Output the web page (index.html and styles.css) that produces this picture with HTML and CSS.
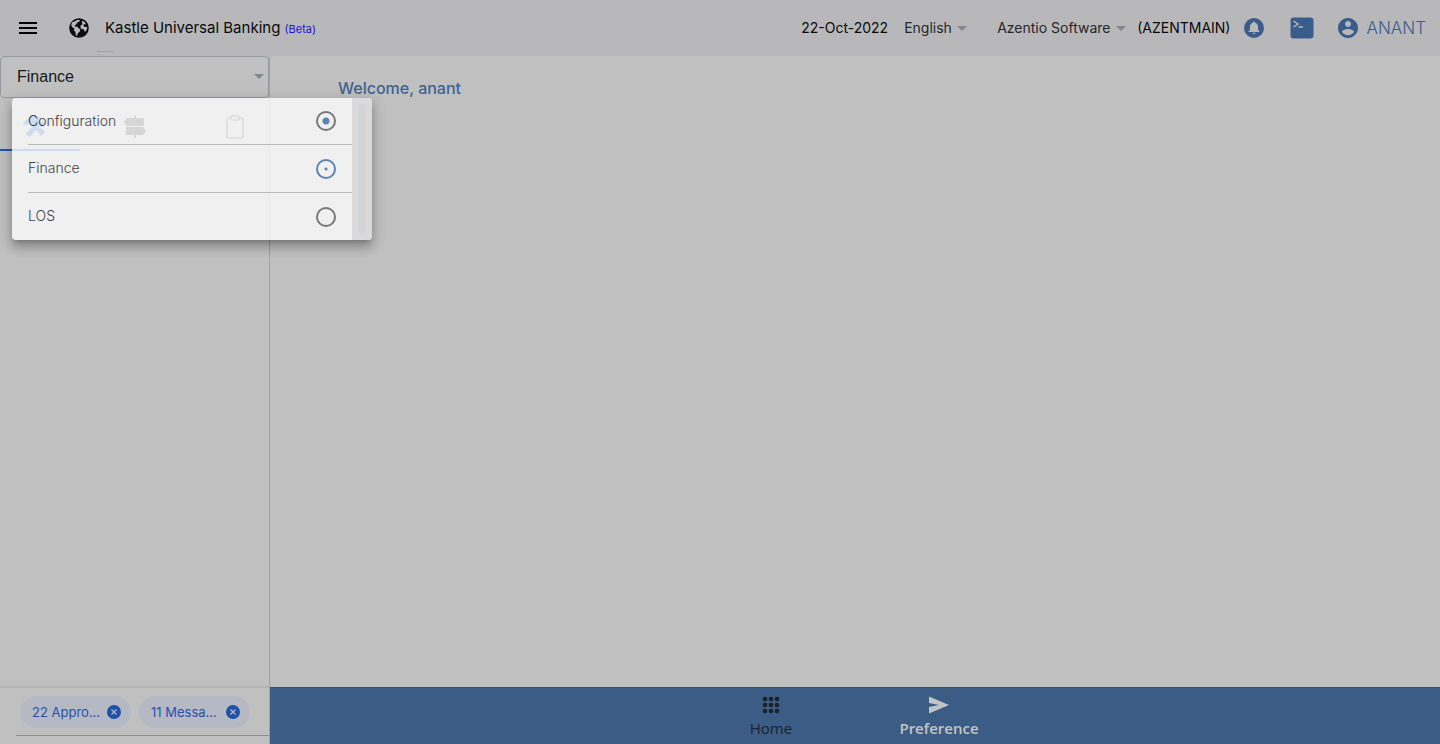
FILE: index.html
```html
<!DOCTYPE html>
<html lang="en">
<head>
<meta charset="utf-8">
<title>Kastle Universal Banking</title>
<link rel="stylesheet" href="styles.css">
</head>
<body>
<div class="app">
  <header class="topbar">
    <button class="icon-btn menu-btn" aria-label="Menu"><svg width="18" height="12" viewBox="0 0 18 12"><path d="M0 0h18v2H0zM0 5h18v2H0zM0 10h18v2H0z"/></svg></button>
    <button class="icon-btn globe-btn" aria-label="Region"><svg width="20" height="20" viewBox="0 0 512 512"><path fill="#0b0c0e" fill-rule="evenodd" d="M256 5a251 251 0 1 0 0 502 251 251 0 0 0 0-502zM152 82l40-24 55-12 35 20-28 34-50 12-10 45-50 28 10 32 62 5 40 50 35 12-14 62-55 48-16 65-33-18-8-80-40-45 12-50-50-30-32-60 22-70zM338 66l60 35 43 64-42-9-30 20 10 40 35 15 48-9v52l-35 73-34-6-15-52-58-7-30-45 12-50 48-30-18-30z"/></svg></button>
    <h1 class="title">Kastle Universal Banking <span class="beta">(Beta)</span></h1>
    <span class="title-rule"></span>
    <time class="date">22-Oct-2022</time>
    <div class="pick language"><select aria-label="Language"><option>English</option></select></div>
    <div class="pick company"><select aria-label="Company"><option>Azentio Software</option></select></div>
    <span class="entity">(AZENTMAIN)</span>
    <button class="icon-btn bell-btn" aria-label="Notifications"><svg width="20" height="20" viewBox="0 0 20 20"><circle cx="10" cy="10" r="10" fill="#3a5c8a"/><path fill="#b8b8ba" d="M10 3.400c-.6 0-1 .4-1 1v.4C7 5.300 5.900 7 5.900 9v3l-1.300 1.300v.7h10.800v-.7L14.100 12V9c0-2-1.100-3.700-3.100-4.200v-.4c0-.6-.4-1-1-1zM8.600 14.800a1.400 1.400 0 0 0 2.800 0z"/></svg></button>
    <button class="icon-btn terminal-btn" aria-label="Console"><svg width="24" height="22" viewBox="0 0 24 22"><rect x=".5" y=".5" width="23" height="21" rx="3" fill="#3a5c8a"/><path fill="none" stroke="#b8b8ba" stroke-width="1.500" d="M3.500 4l4.500 3-4.500 3M8.500 10H13"/></svg></button>
    <button class="icon-btn user"><svg width="20" height="20" viewBox="2 2 20 20"><path fill="#3a5c8a" d="M12 2C6.480 2 2 6.480 2 12s4.480 10 10 10 10-4.480 10-10S17.520 2 12 2zm0 3c1.660 0 3 1.340 3 3s-1.340 3-3 3-3-1.340-3-3 1.340-3 3-3zm0 14.200c-2.500 0-4.710-1.280-6-3.220.03-1.990 4-3.080 6-3.080 1.990 0 5.970 1.090 6 3.080-1.290 1.940-3.500 3.220-6 3.220z"/></svg><span>ANANT</span></button>
  </header>

  <div class="body">
    <aside class="sidebar">
      <div class="module">
        <select class="module-select" aria-label="Module"><option>Finance</option></select>
        <div class="popover" role="radiogroup" aria-label="Modules">
          <div class="options">
            <label class="option"><span>Configuration</span><input class="radio on" type="radio" name="module"></label>
            <label class="option"><span>Finance</span><input class="radio closing" type="radio" name="module"></label>
            <label class="option"><span>LOS</span><input class="radio" type="radio" name="module"></label>
          </div>
          <div class="scroll"><div class="thumb"></div></div>
        </div>
      </div>
      <nav class="tabs">
        <button class="tab active" aria-label="Tools"><svg width="24" height="24" viewBox="0 0 24 24" fill="#1f58b8"><path d="M0 8l7-6c3-1 6-1 8 1l-3 1 1 3-3 4-3-3-2 1-2 2zM14 15.500l3.500-3L22 17l-4 4zM2.500 18.500L12.500 9c-1-4 2-7.500 6-7l-2.500 3 2 2.500 3.500-1.500c.5 4-2.500 6.500-6 6L6.500 22z"/><path d="M13 11.500l3.500 3-1.500 1.500-3.500-3z"/></svg></button>
        <button class="tab" aria-label="Directions"><svg width="24" height="24" viewBox="0 0 24 24" fill="#404040"><path d="M4 3h7V1h2v2h8v8H4L1 7zM3 12h17l3 4-3 4h-7v3h-2v-3H3z"/><path stroke="#c0c0c0" d="M3 11.500h18"/></svg></button>
        <button class="tab" aria-label="Clipboard"><svg width="24" height="24" viewBox="0 0 24 24" fill="none" stroke="#404040" stroke-width="1.200"><rect x="4" y="3" width="16" height="20" rx="2"/><rect x="8" y="1" width="8" height="4" rx="1" fill="#c0c0c0"/></svg></button>
      </nav>
      <div class="side-footer">
        <div class="chips">
          <div class="chip"><span>22 Appro...</span><button class="close" aria-label="Dismiss approvals"><svg width="14" height="14" viewBox="0 0 14 14"><circle cx="7" cy="7" r="7" fill="#1f50aa"/><path stroke="#b4bac6" stroke-width="1.200" d="M4.500 4.500l5 5m0-5l-5 5"/></svg></button></div>
          <div class="chip"><span>11 Messa...</span><button class="close" aria-label="Dismiss messages"><svg width="14" height="14" viewBox="0 0 14 14"><circle cx="7" cy="7" r="7" fill="#1f50aa"/><path stroke="#b4bac6" stroke-width="1.200" d="M4.500 4.500l5 5m0-5l-5 5"/></svg></button></div>
        </div>
      </div>
    </aside>
    <div class="content">
      <main class="main"><h2 class="welcome">Welcome, anant</h2></main>
      <nav class="bottom">
        <button class="nav-item"><svg width="18" height="18" viewBox="0 0 18 18" fill="#1c2128"><circle cx="3" cy="3" r="2.300"/><circle cx="9" cy="3" r="2.300"/><circle cx="15" cy="3" r="2.300"/><circle cx="3" cy="9" r="2.300"/><circle cx="9" cy="9" r="2.300"/><circle cx="15" cy="9" r="2.300"/><circle cx="3" cy="15" r="2.300"/><circle cx="9" cy="15" r="2.300"/><circle cx="15" cy="15" r="2.300"/></svg><span>Home</span></button>
        <button class="nav-item selected"><svg width="20" height="18" viewBox="0 0 20 18" fill="#c4c4c4"><path d="M0 .5L20 9 0 17.500V11l10-2L0 7z"/></svg><span>Preference</span></button>
      </nav>
    </div>
  </div>
</div>
</body>
</html>
```
FILE: styles.css
```css
* { box-sizing: border-box; }
body { margin: 0; background: #c0c0c0; font-family: Inter, "Liberation Sans", sans-serif; font-size: 14px; color: #08090b; }
button, select { font: inherit; color: inherit; background: none; border: 0; padding: 0; margin: 0; }
svg { display: block; }
.app { min-height: 100vh; display: flex; flex-direction: column; }
.topbar { height: 56px; background: #b8b8ba; display: flex; align-items: center; padding: 0 14px 0 19px; position: relative; white-space: nowrap; }
.globe-btn { margin-left: 32px; }
.title { margin: 0 auto 0 16px; padding-bottom: 2px; font-size: 15px; font-weight: 400; }
.beta { font-size: 11px; color: #1c14cc; }
.title-rule { position: absolute; left: 97px; top: 51px; width: 16px; height: 1px; background: #a0a0a2; }
.date, .entity, .pick select { padding-bottom: 2px; }
.pick { position: relative; color: #24272c; display: flex; align-items: center; }
.pick select { appearance: none; }
.pick::after { content: ""; border: 5px solid transparent; border-top-color: #85868a; border-bottom: 0; margin-left: 5px; }
.language { margin-left: 16px; }
.company { margin-left: 30px; }
.entity { margin-left: 11px; }
.bell-btn { margin-left: 14px; }
.terminal-btn { margin-left: 26px; }
.user { margin-left: 24px; display: flex; align-items: center; gap: 8px; font-size: 17px; font-weight: 300; color: #3a5c8a; }
.body { flex: 1; display: flex; }
.sidebar { width: 270px; flex: none; border-right: 1px solid #a0a2a4; display: flex; flex-direction: column; }
.module { position: relative; }
.module-select { appearance: none; display: block; width: 100%; height: 42px; padding: 0 16px 2px; border: 1px solid #96999e; border-radius: 4px; font-family: "Liberation Sans", Arial, sans-serif; font-size: 16px; color: #15181c; }
.module::before { content: ""; position: absolute; right: 5px; top: 18px; border: 5px solid transparent; border-top-color: #85868a; border-bottom: 0; }
.popover { position: absolute; z-index: 2; left: 12px; top: 42px; width: 360px; display: flex; border-radius: 4px; overflow: hidden; background: #fcfcfc; opacity: .8; box-shadow: 0 5px 5px -3px rgba(0,0,0,.25), 0 8px 10px 1px rgba(0,0,0,.2), 0 3px 14px 2px rgba(0,0,0,.16); }
.options { flex: 1; padding-left: 16px; }
.option { display: flex; align-items: center; justify-content: space-between; height: 47px; padding-right: 16px; font-weight: 300; color: #222428; }
.option span { padding-bottom: 2px; }
.option:not(:last-child) { border-bottom: 1px solid #b8b8b8; }
.option + .option:not(:last-child) { height: 48px; }
.radio { appearance: none; margin: 0; width: 20px; height: 20px; border: 2px solid #676767; border-radius: 50%; }
.radio.on { background: radial-gradient(circle, #4574ad 3px, transparent 4px); }
.radio.closing { border-color: #4574ad; background: radial-gradient(circle, #4574ad 1px, transparent 2px); }
.scroll { width: 20px; background: #e4e0e1; padding: 6px; display: flex; }
.thumb { width: 8px; border-radius: 4px; background: #d4dcde; }
.tabs { display: flex; height: 53px; }
.tab { width: 100px; padding: 5px 0 0 23px; display: flex; align-items: center; position: relative; flex: none; }
.tab:last-child { width: 69px; }
.tab.active::after { content: ""; position: absolute; left: 0; bottom: 0; width: 80px; height: 2px; background: #1f58b8; }
.side-footer { margin-top: auto; height: 58px; border-top: 2px solid #b3b4b5; padding-left: 16px; }
.chips { display: flex; gap: 8px; padding: 8px 4px 7px; border-bottom: 1px solid #8e8f90; }
.chip { display: flex; align-items: center; width: 111px; height: 32px; padding: 0 10px 0 12px; border-radius: 16px; background: #b4b9c4; color: #2a50ac; font-size: 13px; justify-content: space-between; white-space: nowrap; }
.content { flex: 1; display: flex; flex-direction: column; min-width: 0; }
.main { flex: 1; padding: 22px 68px; }
.welcome { margin: 0; font-size: 16px; line-height: 20px; font-weight: 500; color: #3f6291; }
.bottom { height: 57px; background: #3a5c85; border-top: 1px solid #34537a; display: flex; justify-content: center; }
.nav-item { width: 168px; display: flex; flex-direction: column; align-items: center; padding-top: 8px; gap: 4px; font-family: "Noto Sans", sans-serif; font-size: 15px; line-height: 20px; color: #1d2530; }
.nav-item.selected { color: #c4c4c4; font-family: "Open Sans", "Noto Sans", sans-serif; font-weight: 600; }
```
